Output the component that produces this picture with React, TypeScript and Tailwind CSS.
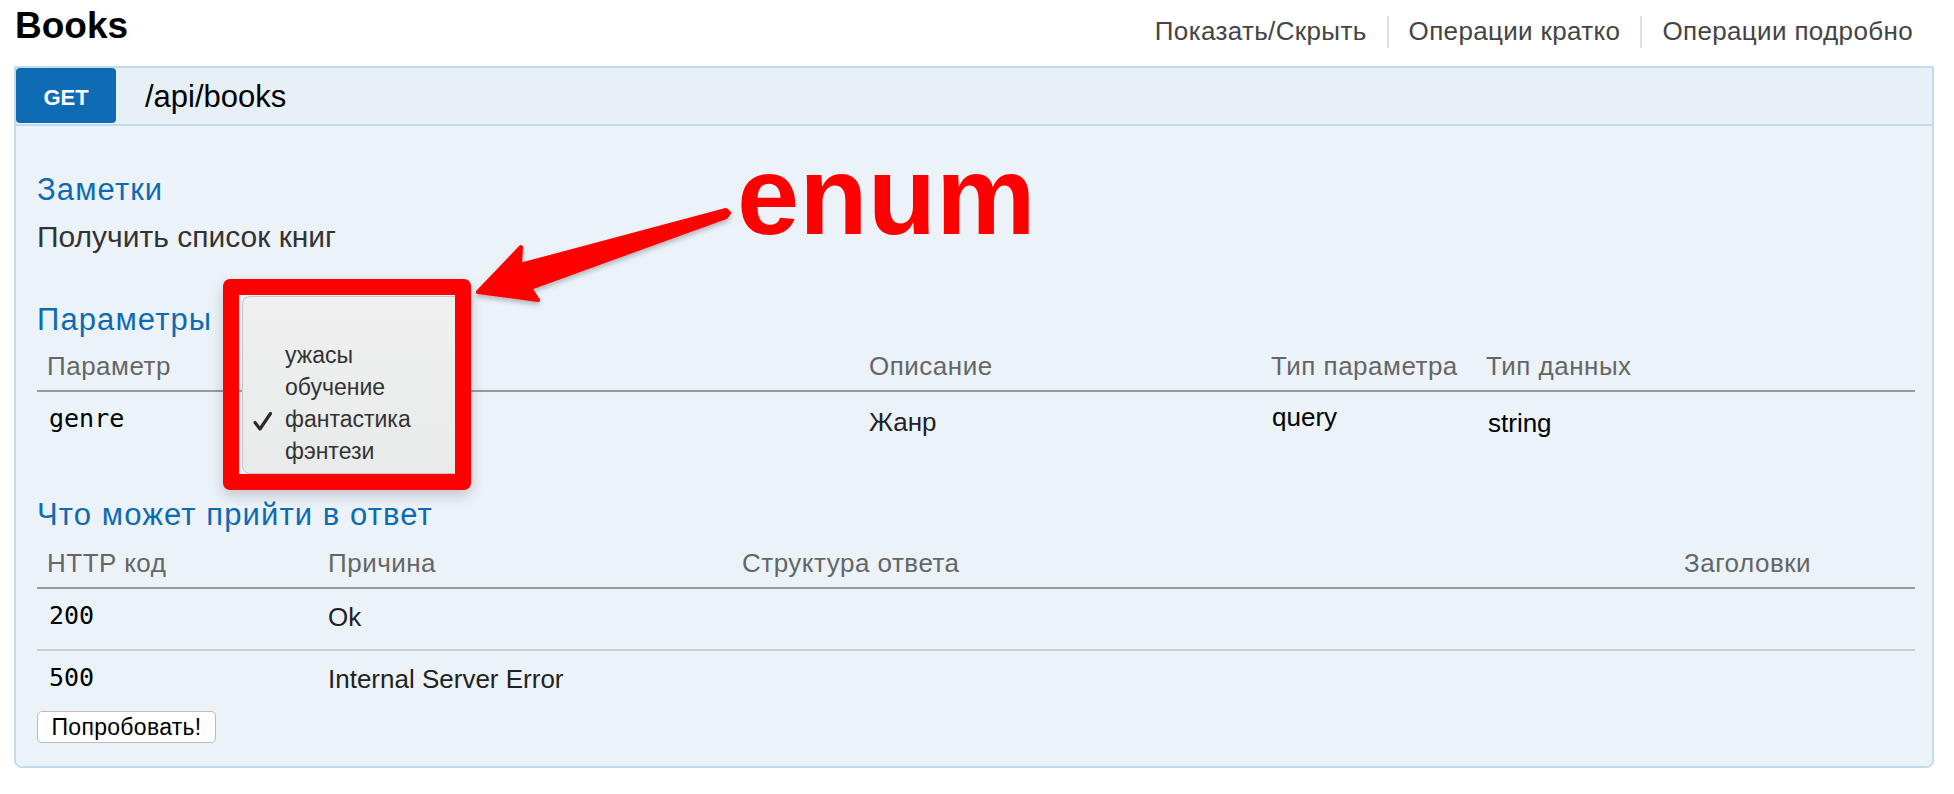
import React from 'react';

const paramCols = 'grid grid-cols-[200px_622px_402px_215px_439px]';
const respCols = 'grid grid-cols-[281px_414px_942px_237px]';

const enumOptions = ['', 'ужасы', 'обучение', 'фантастика', 'фэнтези'];

function EnumPopup() {
  return (
    <div className="absolute left-[223px] top-[279px] w-[248px] h-[211px] border-[16px] border-[#ff0000] rounded-[7px] overflow-hidden shadow-[0_6px_14px_rgba(0,0,0,0.18)]">
      <div className="absolute left-[3px] top-[1px] w-[260px] h-[178px] bg-gradient-to-b from-[#efefef] to-[#e9ebeb] border border-[#c4c4c4] rounded-[8px]">
        <div className="pt-[10px]">
          {enumOptions.map((opt, i) => (
            <div key={i} className="relative h-[32px] pl-[42px] text-[23px] leading-[32px] text-[#333]">
              {opt === 'фантастика' && (
                <svg className="absolute left-[10px] top-[9px]" width="19" height="19" viewBox="0 0 19 19">
                  <path d="M2 10.5 L7 17 L17.5 1.5" fill="none" stroke="#2b2b2b" strokeWidth="3.2" strokeLinecap="round" strokeLinejoin="round" />
                </svg>
              )}
              {opt}
            </div>
          ))}
        </div>
      </div>
    </div>
  );
}

function Arrow() {
  return (
    <svg className="absolute left-0 top-0 pointer-events-none" width="1954" height="794" viewBox="0 0 1954 794">
      <defs>
        <filter id="arrowShadow" x="-10%" y="-10%" width="120%" height="140%">
          <feDropShadow dx="0" dy="3" stdDeviation="2.5" floodColor="#000" floodOpacity="0.25" />
        </filter>
      </defs>
      <polygon
        points="478,292 521,247 520,265 726,210 729,213 726,217 530,288 538,300"
        fill="#ff0000"
        stroke="#ff0000"
        strokeWidth="4"
        strokeLinejoin="round"
        filter="url(#arrowShadow)"
      />
    </svg>
  );
}

export default function App() {
  return (
    <div className="relative w-[1954px] h-[794px] overflow-hidden bg-white font-['Liberation_Sans',Arial,sans-serif]">
      {/* top line */}
      <div className="flex h-[66px] pl-[15px]">
        <h2 className="pt-[7px] text-[37px] leading-[37px] font-bold text-black">Books</h2>
        <div className="ml-auto mr-[41px] flex items-start gap-[20px] pt-[16px] text-[26px] leading-[26px] tracking-[0.35px] text-[#444]">
          <span className="mt-[2px]">Показать/Скрыть</span>
          <span className="h-[32px] w-[2px] bg-[#e0e0e0]" />
          <span className="mt-[2px]">Операции кратко</span>
          <span className="h-[32px] w-[2px] bg-[#e0e0e0]" />
          <span className="mt-[2px]">Операции подробно</span>
        </div>
      </div>

      {/* operation panel */}
      <div className="ml-[14px] w-[1920px] border-2 border-[#c3d9ec] rounded-b-[8px] overflow-hidden">
        <div className="flex h-[58px] items-center bg-[#e7f0f7] border-b-2 border-[#c3d9ec]">
          <div className="flex h-[55px] w-[100px] self-start items-center justify-center rounded-[4px] bg-[#0f6ab4] pt-[3px] text-[22px] font-bold text-white">
            GET
          </div>
          <span className="ml-[29px] text-[31px] leading-[31px] text-black">/api/books</span>
        </div>

        <div className="bg-[#ebf3f9] pl-[21px] pr-[17px] pb-[23px]">
          <h4 className="pt-[49px] text-[31px] leading-[30px] tracking-[1.1px] text-[#0f6ab4]">Заметки</h4>
          <p className="mt-[17px] text-[30px] leading-[30px] text-[#333]">Получить список книг</p>

          <h4 className="mt-[53px] text-[31px] leading-[30px] tracking-[1.1px] text-[#0f6ab4]">Параметры</h4>
          <div className={`${paramCols} pt-[19px] pb-[11px] border-b-2 border-[#999] text-[26px] leading-[25px] tracking-[0.5px] text-[#666]`}>
            <div className="pl-[10px]">Параметр</div>
            <div />
            <div className="pl-[10px]">Описание</div>
            <div className="pl-[10px]">Тип параметра</div>
            <div className="pl-[10px]">Тип данных</div>
          </div>
          <div className={`${paramCols} h-[108px] text-[26px] leading-[26px]`}>
            <div className="pl-[12px] pt-[14px] font-['DejaVu_Sans_Mono',monospace] text-[25px] leading-[25px] text-black">genre</div>
            <div />
            <div className="pl-[10px] pt-[17px] text-[#222]">Жанр</div>
            <div className="pl-[11px] pt-[12px] text-black">query</div>
            <div className="pl-[12px] pt-[18px] text-black">string</div>
          </div>

          <h4 className="text-[31px] leading-[30px] tracking-[1.1px] text-[#0f6ab4]">Что может прийти в ответ</h4>
          <div className={`${respCols} pt-[21px] pb-[11px] border-b-2 border-[#999] text-[26px] leading-[25px] tracking-[0.5px] text-[#666]`}>
            <div className="pl-[10px]">HTTP код</div>
            <div className="pl-[10px]">Причина</div>
            <div className="pl-[10px]">Структура ответа</div>
            <div className="pl-[10px]">Заголовки</div>
          </div>
          <div className={`${respCols} h-[62px] border-b-2 border-[#cfcfcf] text-[26px] leading-[26px]`}>
            <div className="pl-[12px] pt-[14px] font-['DejaVu_Sans_Mono',monospace] text-[25px] leading-[25px] text-black">200</div>
            <div className="pl-[10px] pt-[15px] text-[#222]">Ok</div>
            <div />
            <div />
          </div>
          <div className={`${respCols} h-[58px] text-[26px] leading-[26px]`}>
            <div className="pl-[12px] pt-[14px] font-['DejaVu_Sans_Mono',monospace] text-[25px] leading-[25px] text-black">500</div>
            <div className="pl-[10px] pt-[15px] text-[#222]">Internal Server Error</div>
            <div />
            <div />
          </div>
          <button className="mt-[2px] flex h-[32px] w-[179px] items-center justify-center rounded-[5px] border border-[#bbb] bg-white text-[23px] tracking-[0.3px] text-black">
            Попробовать!
          </button>
        </div>
      </div>

      {/* annotation overlay */}
      <div className="absolute left-[737px] top-[140px] text-[112px] leading-[112px] font-bold text-[#ff0000]">enum</div>
      <Arrow />
      <EnumPopup />
    </div>
  );
}
